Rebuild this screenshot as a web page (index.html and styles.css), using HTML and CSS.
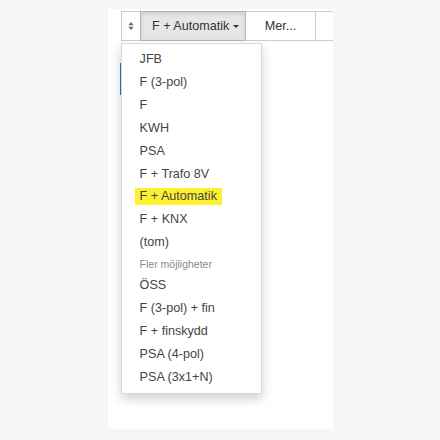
FILE: index.html
```html
<!DOCTYPE html>
<html lang="sv">
<head>
<meta charset="utf-8">
<title>Dropdown</title>
<link rel="stylesheet" href="styles.css">
</head>
<body>
<div class="panel">
  <div class="toolbar">
    <button class="btn btn-icon" type="button" aria-label="Sortera">
      <svg width="6" height="8" viewBox="0 0 6 8"><path d="M3 0 L5.6 3.2 H0.4 Z M3 8 L0.4 4.8 H5.6 Z" fill="#666"/></svg>
    </button>
    <button class="btn btn-active" type="button">F + Automatik <span class="caret"></span></button>
    <button class="btn btn-more" type="button">Mer...</button>
    <button class="btn btn-rest" type="button"></button>
  </div>
  <span class="focus-bar"></span>
  <ul class="menu">
    <li class="item">JFB</li>
    <li class="item">F (3-pol)</li>
    <li class="item">F</li>
    <li class="item">KWH</li>
    <li class="item">PSA</li>
    <li class="item">F + Trafo 8V</li>
    <li class="item"><span class="mark">F + Automatik</span></li>
    <li class="item">F + KNX</li>
    <li class="item">(tom)</li>
    <li class="header">Fler möjligheter</li>
    <li class="item">ÖSS</li>
    <li class="item">F (3-pol) + fin</li>
    <li class="item">F + finskydd</li>
    <li class="item">PSA (4-pol)</li>
    <li class="item">PSA (3x1+N)</li>
  </ul>
</div>
</body>
</html>
```

FILE: styles.css
```css
html, body {
  margin: 0;
  padding: 0;
  background: #f6f6f6;
  font-family: "Liberation Sans", Arial, sans-serif;
}

.panel {
  position: relative;
  margin: 9px 0 0 108px;
  width: 225px;
  height: 420px;
  background: #ffffff;
  overflow: hidden;
  padding: 2px 0 0 13px;
  box-sizing: border-box;
}

.toolbar {
  display: flex;
  width: 260px;
  height: 30px;
}

.btn {
  box-sizing: border-box;
  height: 30px;
  margin: 0 0 0 -1px;
  padding: 0 10px;
  border: 1px solid #cccccc;
  background: #ffffff;
  color: #333333;
  font-family: "Liberation Sans", Arial, sans-serif;
  font-size: 12.6px;
  line-height: 28px;
  white-space: nowrap;
  display: flex;
  align-items: center;
  justify-content: center;
  flex: none;
}

.btn:first-child {
  margin-left: 0;
}

.btn-icon {
  width: 20px;
  padding: 0;
}

.btn-active {
  width: 106px;
  padding-left: 11px;
  justify-content: flex-start;
  background: #e6e6e6;
  border-color: #b5b5b5;
  box-shadow: inset 0 2px 4px rgba(0, 0, 0, 0.1);
  position: relative;
  z-index: 1;
}

.caret {
  display: inline-block;
  width: 0;
  height: 0;
  margin-left: 4px;
  border-top: 3.5px solid #333333;
  border-left: 3.5px solid transparent;
  border-right: 3.5px solid transparent;
}

.btn-more {
  width: 71px;
}

.btn-rest {
  width: 40px;
}

.focus-bar {
  position: absolute;
  left: 12px;
  top: 54px;
  width: 1.5px;
  height: 32px;
  background: #3c6fa8;
}

.menu {
  position: absolute;
  left: 13px;
  top: 34px;
  width: 141px;
  box-sizing: border-box;
  margin: 0;
  padding: 4.6px 0 4.2px;
  list-style: none;
  background: #ffffff;
  border: 1px solid rgba(0, 0, 0, 0.15);
  box-shadow: 0 5px 10px rgba(0, 0, 0, 0.18);
  z-index: 2;
}

.item {
  padding: 2.65px 17.6px;
  line-height: 17.6px;
  font-size: 12.6px;
  color: #444444;
  white-space: nowrap;
}

.header {
  padding: 2.65px 17.6px;
  line-height: 15px;
  font-size: 10.5px;
  color: #8a8a8a;
  white-space: nowrap;
}

.mark {
  display: inline-block;
  background: #fcf030;
  padding: 0 5px;
  margin-left: -5px;
  line-height: 17px;
}
```
